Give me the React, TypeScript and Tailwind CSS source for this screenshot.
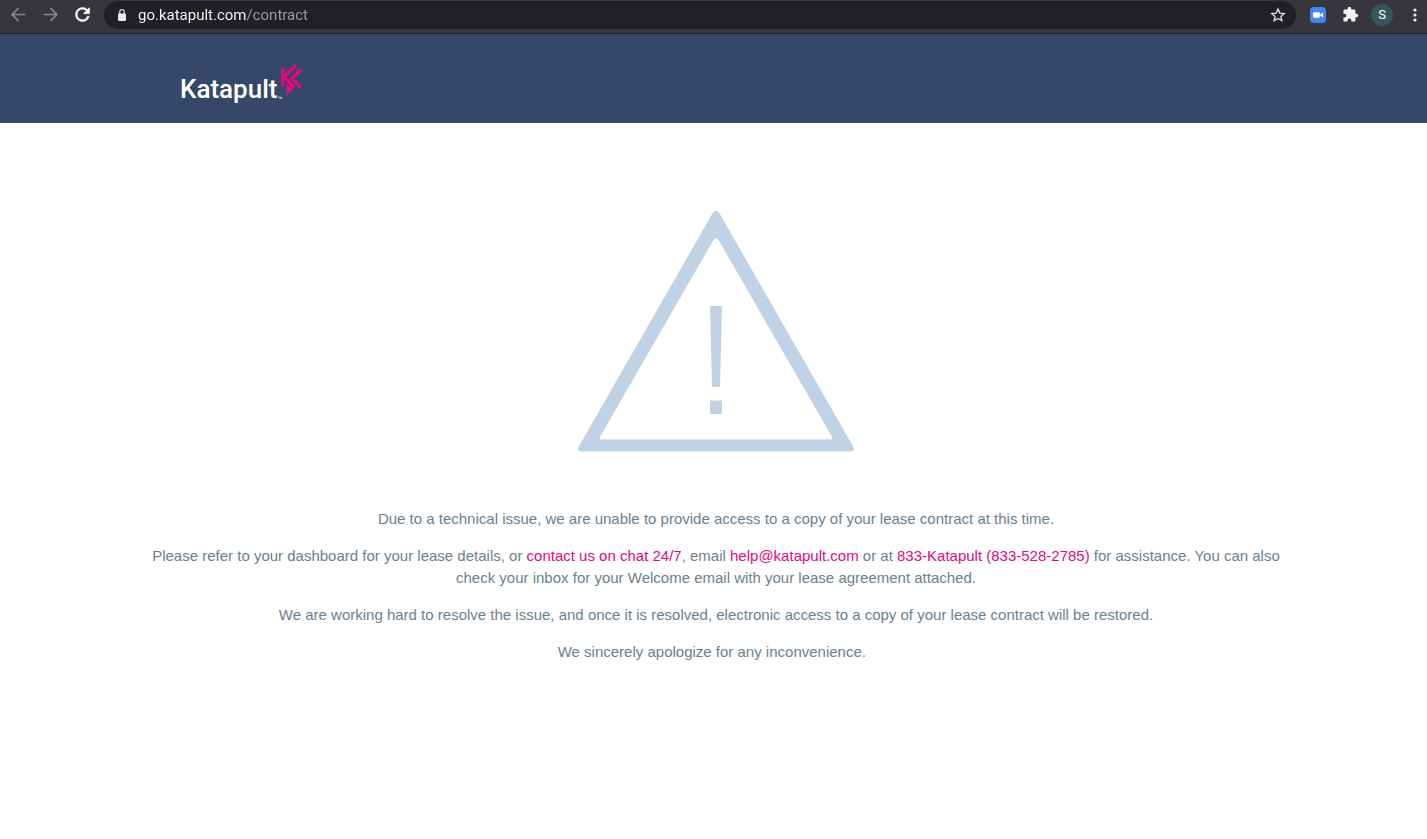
import { useState } from 'react';

const iconButton = 'flex size-8 shrink-0 items-center justify-center';

function BrowserBar() {
  const [url, setUrl] = useState('go.katapult.com/contract');

  return (
    <div className="flex h-[34px] items-center border-b border-[#202124] bg-[#36373a] pb-1 pl-[2px] text-white">
      <button aria-label="Back" className={`${iconButton} text-[#88898c]`}>
        <svg width="23" height="23" viewBox="0 0 24 24" fill="none" stroke="currentColor" strokeWidth="1.8">
          <path d="M19 12H5.5M12 5.3 5.3 12l6.7 6.7" />
        </svg>
      </button>
      <button aria-label="Forward" className={`${iconButton} text-[#88898c]`}>
        <svg width="23" height="23" viewBox="0 0 24 24" fill="none" stroke="currentColor" strokeWidth="1.8">
          <path d="M5 12h13.5M12 5.3l6.7 6.7-6.7 6.7" />
        </svg>
      </button>
      <button aria-label="Reload" className={iconButton}>
        <svg width="21" height="21" viewBox="0 0 24 24" fill="currentColor" stroke="currentColor" strokeWidth="0.6">
          <path d="M17.65 6.35A7.96 7.96 0 0 0 12 4a8 8 0 1 0 7.73 10h-2.08A6 6 0 1 1 12 6c1.66 0 3.14.69 4.22 1.78L13 11h7V4z" />
        </svg>
      </button>

      <div className="ml-[6px] flex h-7 min-w-0 flex-1 items-center rounded-full bg-[#202124] pr-2 pl-3">
        <svg className="shrink-0" width="12" height="14" viewBox="0 0 12 14" fill="#e8eaed">
          <path d="M3 5.500h6q1 0 1 1V12q0 1-1 1H3q-1 0-1-1V6.500q0-1 1-1z" />
          <path d="M3.800 6V3.700a2.200 2.200 0 0 1 4.400 0V6" fill="none" stroke="#e8eaed" strokeWidth="1.200" />
        </svg>
        {/* host in white, path in grey */}
        <input
          aria-label="Address"
          value={url}
          onChange={(e) => setUrl(e.target.value)}
          className="ml-[10px] h-6 min-w-0 flex-1 bg-[linear-gradient(to_right,#ffffff_109px,#9aa0a6_109px)] bg-clip-text font-['Roboto',sans-serif] text-[15px] text-transparent caret-white outline-none"
        />
        <button aria-label="Bookmark this page" className="flex size-5 shrink-0 items-center justify-center">
          <svg width="16" height="16" viewBox="0 0 24 24" fill="none" stroke="#dfe1e5" strokeWidth="2">
            <path d="m12 3 2.700 6.100 6.600.6-5 4.400 1.500 6.500L12 17.200l-5.800 3.400 1.500-6.500-5-4.400 6.600-.6z" />
          </svg>
        </button>
      </div>

      <button aria-label="Zoom" className={`${iconButton} ml-[6px]`}>
        <svg width="16" height="16" viewBox="0 0 16 16">
          <rect width="16" height="16" rx="4" fill="#4585f5" />
          <rect x="3" y="5.300" width="6.800" height="5.400" rx="1.200" fill="#fff" />
          <path d="M10.300 7.200 13 5.400v5.200l-2.700-1.800z" fill="#fff" />
        </svg>
      </button>
      <button aria-label="Extensions" className={iconButton}>
        <svg width="17" height="17" viewBox="0 0 24 24" fill="#f1f3f4">
          <path d="M20.500 11H19V7a2 2 0 0 0-2-2h-4V3.500a2.500 2.500 0 0 0-5 0V5H4a2 2 0 0 0-2 2v3.800h1.500a2.700 2.700 0 0 1 0 5.400H2V20a2 2 0 0 0 2 2h3.800v-1.500a2.700 2.700 0 0 1 5.400 0V22H17a2 2 0 0 0 2-2v-4h1.500a2.500 2.500 0 0 0 0-5z" />
        </svg>
      </button>
      <button aria-label="Profile" className={iconButton}>
        <span className="flex size-[22px] items-center justify-center rounded-full bg-[#365759] font-['Roboto',sans-serif] text-[13px]">
          S
        </span>
      </button>
      <button aria-label="Menu" className="flex h-8 w-[29px] shrink-0 items-center justify-center pl-1">
        <svg width="4" height="16" viewBox="0 0 4 16" fill="#f1f3f4">
          <circle cx="2" cy="3" r="1.600" />
          <circle cx="2" cy="8" r="1.600" />
          <circle cx="2" cy="13" r="1.600" />
        </svg>
      </button>
    </div>
  );
}

function Logo() {
  return (
    <a href="/" className="flex w-fit items-start text-white">
      <span className="pt-[11px] font-['Roboto',sans-serif] text-[26px] leading-8 font-medium">Katapult</span>
      <span className="pt-[34px] text-[5px] leading-1">™</span>
      <svg className="-ml-1" width="26" height="36" viewBox="0 0 26 36" fill="none" stroke="#e5087e" strokeWidth="3.200">
        <path d="M4.800 5.500v18.500M18.200 3 6 15l9.500 9.500M22.800 7.500 13.800 16.300l9 9.500" />
        <path d="M8.500 22v11l7.500-6.500z" fill="#e5087e" stroke="none" />
      </svg>
    </a>
  );
}

function WarningIcon() {
  return (
    <svg className="mx-auto" width="278" height="242" viewBox="0 0 278 242" fill="#c0d3e5">
      <path
        fillRule="evenodd"
        d="M136 2.500Q139 -1 142 2.500L276.500 237Q278 241 274 241.500H4Q0 241 1.500 237ZM136.500 30 23.500 226Q21.500 229.500 25.500 229.500H252.500Q256.500 229.500 254.500 226L141.500 30Q139 27 136.500 30Z"
      />
      <path d="M133 96h12l-2 81h-8zM133 190.500h12v13.500h-12z" />
    </svg>
  );
}

export default function App() {
  return (
    <div className="min-h-screen bg-white font-['Liberation_Sans',Arial,sans-serif]">
      <BrowserBar />

      <header className="h-[89px] bg-[#364869] pt-7 pl-[180px]">
        <Logo />
      </header>

      <main className="mx-auto max-w-[1145px] pt-[87px] pl-[5px] text-center text-[15px] leading-[22px] text-[#6b7f90]">
        <WarningIcon />
        <div className="mt-[56px] space-y-[15px]">
          <p>
            Due to a technical issue, we are unable to provide access to a copy of your lease contract at this time.
          </p>
          <p>
            Please refer to your dashboard for your lease details, or{' '}
            <a href="#chat" className="text-[#e5087e]">contact us on chat 24/7</a>, email{' '}
            <a href="mailto:help@katapult.com" className="text-[#e5087e]">help@katapult.com</a> or at{' '}
            <a href="tel:8335282785" className="text-[#e5087e]">833-Katapult (833-528-2785)</a> for assistance. You can
            also check your inbox for your Welcome email with your lease agreement attached.
          </p>
          <p>
            We are working hard to resolve the issue, and once it is resolved, electronic access to a copy of your
            lease contract will be restored.
          </p>
          <p>We sincerely apologize for any inconvenience.&nbsp;&nbsp;</p>
        </div>
      </main>
    </div>
  );
}
